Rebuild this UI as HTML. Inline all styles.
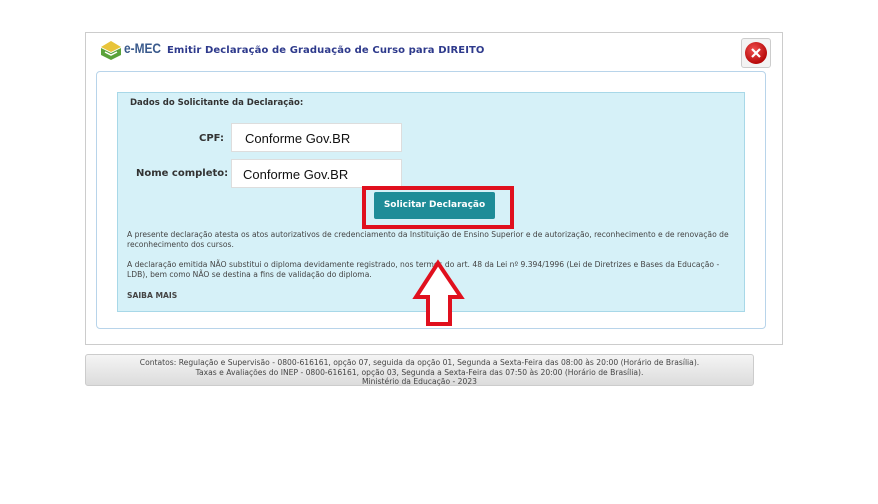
<!DOCTYPE html>
<html><head><meta charset="utf-8"><style>
body{margin:0;width:878px;height:504px;background:#fff;position:relative;font-family:"DejaVu Sans","Liberation Sans",sans-serif;overflow:hidden}
.abs{position:absolute}
.outer{left:85px;top:32px;width:696px;height:311px;border:1px solid #ccc;background:#fff}
.title{left:167px;top:45px;font-size:10px;font-weight:bold;color:#2e3a8c;letter-spacing:0.1px}
.logo{left:124px;top:40px;font-size:14px;font-weight:bold;color:#3a5a8c;font-family:"Liberation Sans",sans-serif;transform:scaleX(0.85);transform-origin:left}
.close{left:741px;top:38px;width:28px;height:28px;border:1px solid #ccc;border-radius:3px;background:#f3f3f3}
.panel{left:96px;top:71px;width:668px;height:256px;border:1px solid #b8d4ea;border-radius:4px;background:#fff}
.cyan{left:117px;top:92px;width:626px;height:218px;border:1px solid #a8d8e8;background:#d6f1f8}
.lbl{font-size:10px;font-weight:bold;color:#333}
.inp{width:171px;height:29px;background:#fff;border:1px solid #ddd;font-family:"Liberation Sans",sans-serif;font-size:13px;color:#111;line-height:29px;box-sizing:border-box;padding-left:13px}
.small{font-size:7.6px;color:#444;line-height:10px}
.btn{left:374px;top:192px;width:121px;height:27px;background:#1e8c98;border-radius:2px;color:#fff;font-size:9px;font-weight:bold;text-align:center;line-height:27px}
.red{left:362px;top:186px;width:144px;height:35px;border:4px solid #e0101e}
.footer{left:85px;top:354px;width:669px;height:32px;border:1px solid #ccc;border-radius:3px;background:linear-gradient(#f4f4f4,#dcdcdc);text-align:center;font-size:7.6px;color:#444;line-height:9.5px;padding-top:3px;box-sizing:border-box}
</style></head><body>
<div class="abs outer"></div>
<svg class="abs" style="left:99px;top:39px" width="24" height="22" viewBox="0 0 24 22"><path d="M2 8 L12 2 L22 8 L12 13Z" fill="#e8c43a"/><path d="M2 9 L12 14 L22 9 L22 16 L12 21 L2 16Z" fill="#5aa23a"/><path d="M6 13 L12 16 L18 13" stroke="#fff" stroke-width="1.5" fill="none"/></svg>
<div class="abs logo">e-MEC</div>
<div class="abs title">Emitir Declaração de Graduação de Curso para DIREITO</div>
<div class="abs close"><svg width="28" height="28"><defs><radialGradient id="g" cx="0.4" cy="0.35" r="0.7"><stop offset="0" stop-color="#f05050"/><stop offset="1" stop-color="#b00000"/></radialGradient></defs><circle cx="14" cy="14" r="11" fill="url(#g)"/><path d="M10 10 L18 18 M18 10 L10 18" stroke="#fff" stroke-width="2.2"/></svg></div>
<div class="abs panel"></div>
<div class="abs cyan"></div>
<div class="abs lbl" style="left:130px;top:98px;font-size:8.5px">Dados do Solicitante da Declaração:</div>
<div class="abs lbl" style="left:199px;top:133px">CPF:</div>
<div class="abs inp" style="left:231px;top:123px">Conforme Gov.BR</div>
<div class="abs lbl" style="left:136px;top:168px">Nome completo:</div>
<div class="abs inp" style="left:231px;top:159px;padding-left:11px">Conforme Gov.BR</div>
<div class="abs red"></div>
<div class="abs btn">Solicitar Declaração</div>
<div class="abs small" style="left:127px;top:230px;width:610px">A presente declaração atesta os atos autorizativos de credenciamento da Instituição de Ensino Superior e de autorização, reconhecimento e de renovação de reconhecimento dos cursos.</div>
<div class="abs small" style="left:127px;top:260px;width:610px">A declaração emitida NÃO substitui o diploma devidamente registrado, nos termos do art. 48 da Lei nº 9.394/1996 (Lei de Diretrizes e Bases da Educação - LDB), bem como NÃO se destina a fins de validação do diploma.</div>
<div class="abs small" style="left:127px;top:291px;font-weight:bold">SAIBA MAIS</div>
<svg class="abs" style="left:410px;top:258px" width="66" height="70"><path d="M28 5 L6 39 L18 39 L18 66 L40 66 L40 39 L51 39 Z" fill="#fff" stroke="#e0101e" stroke-width="4"/></svg>
<div class="abs footer">Contatos: Regulação e Supervisão - 0800-616161, opção 07, seguida da opção 01, Segunda a Sexta-Feira das 08:00 às 20:00 (Horário de Brasília).<br>Taxas e Avaliações do INEP - 0800-616161, opção 03, Segunda a Sexta-Feira das 07:50 às 20:00 (Horário de Brasília).<br>Ministério da Educação - 2023</div>
</body></html>
